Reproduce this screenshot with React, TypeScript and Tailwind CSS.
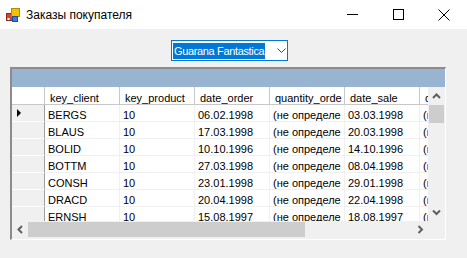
const columns = ["key_client", "key_product", "date_order", "quantity_orde", "date_sale", "date_"];

const rows = [
  ["BERGS", "10", "06.02.1998", "(не определе", "03.03.1998", "(не"],
  ["BLAUS", "10", "17.03.1998", "(не определе", "20.03.1998", "(не"],
  ["BOLID", "10", "10.10.1996", "(не определе", "14.10.1996", "(не"],
  ["BOTTM", "10", "27.03.1998", "(не определе", "08.04.1998", "(не"],
  ["CONSH", "10", "23.01.1998", "(не определе", "29.01.1998", "(не"],
  ["DRACD", "10", "20.04.1998", "(не определе", "22.04.1998", "(не"],
  ["ERNSH", "10", "15.08.1997", "(не определе", "18.08.1997", "(не"],
];

function AppIcon() {
  return (
    <svg width="14" height="14" viewBox="0 0 14 14">
      <rect x="0.5" y="5.5" width="6" height="7" fill="#d9442e" stroke="#8a2a1c" />
      <rect x="5.5" y="0.5" width="8" height="8" fill="#f5c000" stroke="#b58a00" />
      <rect x="6.5" y="8.5" width="5" height="5" fill="#3b7ddd" stroke="#1f4f9a" />
      <rect x="1.5" y="10" width="2" height="2" fill="#fff" />
    </svg>
  );
}

function Chevron({ dir }: { dir: "up" | "down" | "left" | "right" }) {
  const d = {
    up: "M1 6 L4.5 2.5 L8 6",
    down: "M1 2.5 L4.5 6 L8 2.5",
    left: "M6 1 L2.5 4.5 L6 8",
    right: "M2.5 1 L6 4.5 L2.5 8",
  }[dir];
  return (
    <svg width="9" height="9" viewBox="0 0 9 9">
      <path d={d} fill="none" stroke="#606060" strokeWidth="2" />
    </svg>
  );
}

export default function App() {
  return (
    <div className="w-[467px] h-[258px] bg-[#f0f0f0] flex flex-col overflow-hidden" style={{ fontFamily: '"Liberation Sans", Arial, sans-serif' }}>
      {/* title bar */}
      <div className="h-[29px] bg-white flex items-center shrink-0">
        <div className="pl-[6px] pr-[6px] flex items-center">
          <AppIcon />
        </div>
        <span className="text-[12px] text-black">Заказы покупателя</span>
        <div className="ml-auto flex items-center h-full">
          <div className="w-[46px] h-full flex items-center justify-center">
            <div className="w-[11px] h-px bg-black" />
          </div>
          <div className="w-[46px] h-full flex items-center justify-center">
            <div className="w-[11px] h-[11px] border border-black" />
          </div>
          <div className="w-[46px] h-full flex items-center justify-center">
            <svg width="12" height="12" viewBox="0 0 12 12">
              <path d="M0.5 0.5 L11.5 11.5 M11.5 0.5 L0.5 11.5" stroke="#000" strokeWidth="1" />
            </svg>
          </div>
        </div>
      </div>

      {/* combo */}
      <div className="pt-[11px] pl-[171px] shrink-0">
        <div className="w-[117px] h-[21px] bg-white border border-[#0078d7] flex items-center pl-px pr-px">
          <span className="bg-[#0078d7] text-white text-[11px] tracking-[-0.35px] leading-[16px] px-px whitespace-nowrap">Guarana Fantastica</span>
          <svg className="ml-auto shrink-0" width="9" height="6" viewBox="0 0 9 6">
            <path d="M0.5 0.5 L4.5 4.5 L8.5 0.5" fill="none" stroke="#404040" strokeWidth="1" />
          </svg>
        </div>
      </div>

      {/* grid */}
      <div className="mt-[6px] ml-[10px] w-[436px] h-[173px] border-t-2 border-l-2 border-t-[#8c8c8c] border-l-[#8c8c8c] border-b border-r border-b-white border-r-white flex flex-col text-[11px] text-black">
        <div className="h-[18px] bg-[#99b4d1] shrink-0" />
        <div className="flex h-[134px] shrink-0">
          <div className="flex-1 overflow-hidden bg-white">
            <div className="flex h-[18px] border-b border-[#c8c8c8] w-max">
              <div className="w-[33px] border-r border-[#c8c8c8] bg-white" />
              {columns.map((c) => (
                <div key={c} className="w-[75px] border-r border-[#c8c8c8] pl-[5px] pt-[3px] whitespace-nowrap overflow-hidden">
                  {c}
                </div>
              ))}
            </div>
            {rows.map((r, i) => (
              <div key={i} className="flex h-[17px] border-b border-[#f0f0f0] w-max">
                <div className="w-[33px] bg-[#f0f0f0] border-r border-[#a0a0a0] border-b border-b-white -mb-px flex items-center pl-[5px]">
                  {i === 0 && (
                    <svg width="4" height="8" viewBox="0 0 4 8">
                      <path d="M0 0 L4 4 L0 8 Z" fill="#000" />
                    </svg>
                  )}
                </div>
                {r.map((v, j) => (
                  <div key={j} className="w-[75px] border-r border-[#f0f0f0] pl-[3px] pt-[2px] whitespace-nowrap overflow-hidden">
                    {v}
                  </div>
                ))}
              </div>
            ))}
          </div>
          <div className="w-[17px] bg-[#f0f0f0] flex flex-col shrink-0">
            <div className="h-[18px] flex items-center justify-center">
              <Chevron dir="up" />
            </div>
            <div className="h-[18px] bg-[#cdcdcd] mx-px" />
            <div className="flex-1" />
            <div className="h-[17px] flex items-center justify-center">
              <Chevron dir="down" />
            </div>
          </div>
        </div>
        <div className="flex h-[17px] shrink-0">
          <div className="flex-1 bg-[#f0f0f0] flex items-center">
            <div className="w-[16px] h-full flex items-center justify-center">
              <Chevron dir="left" />
            </div>
            <div className="w-[277px] h-[15px] bg-[#cdcdcd]" />
            <div className="flex-1" />
            <div className="w-[16px] h-full flex items-center justify-center">
              <Chevron dir="right" />
            </div>
          </div>
          <div className="w-[17px] bg-[#f0f0f0]" />
        </div>
      </div>
    </div>
  );
}
